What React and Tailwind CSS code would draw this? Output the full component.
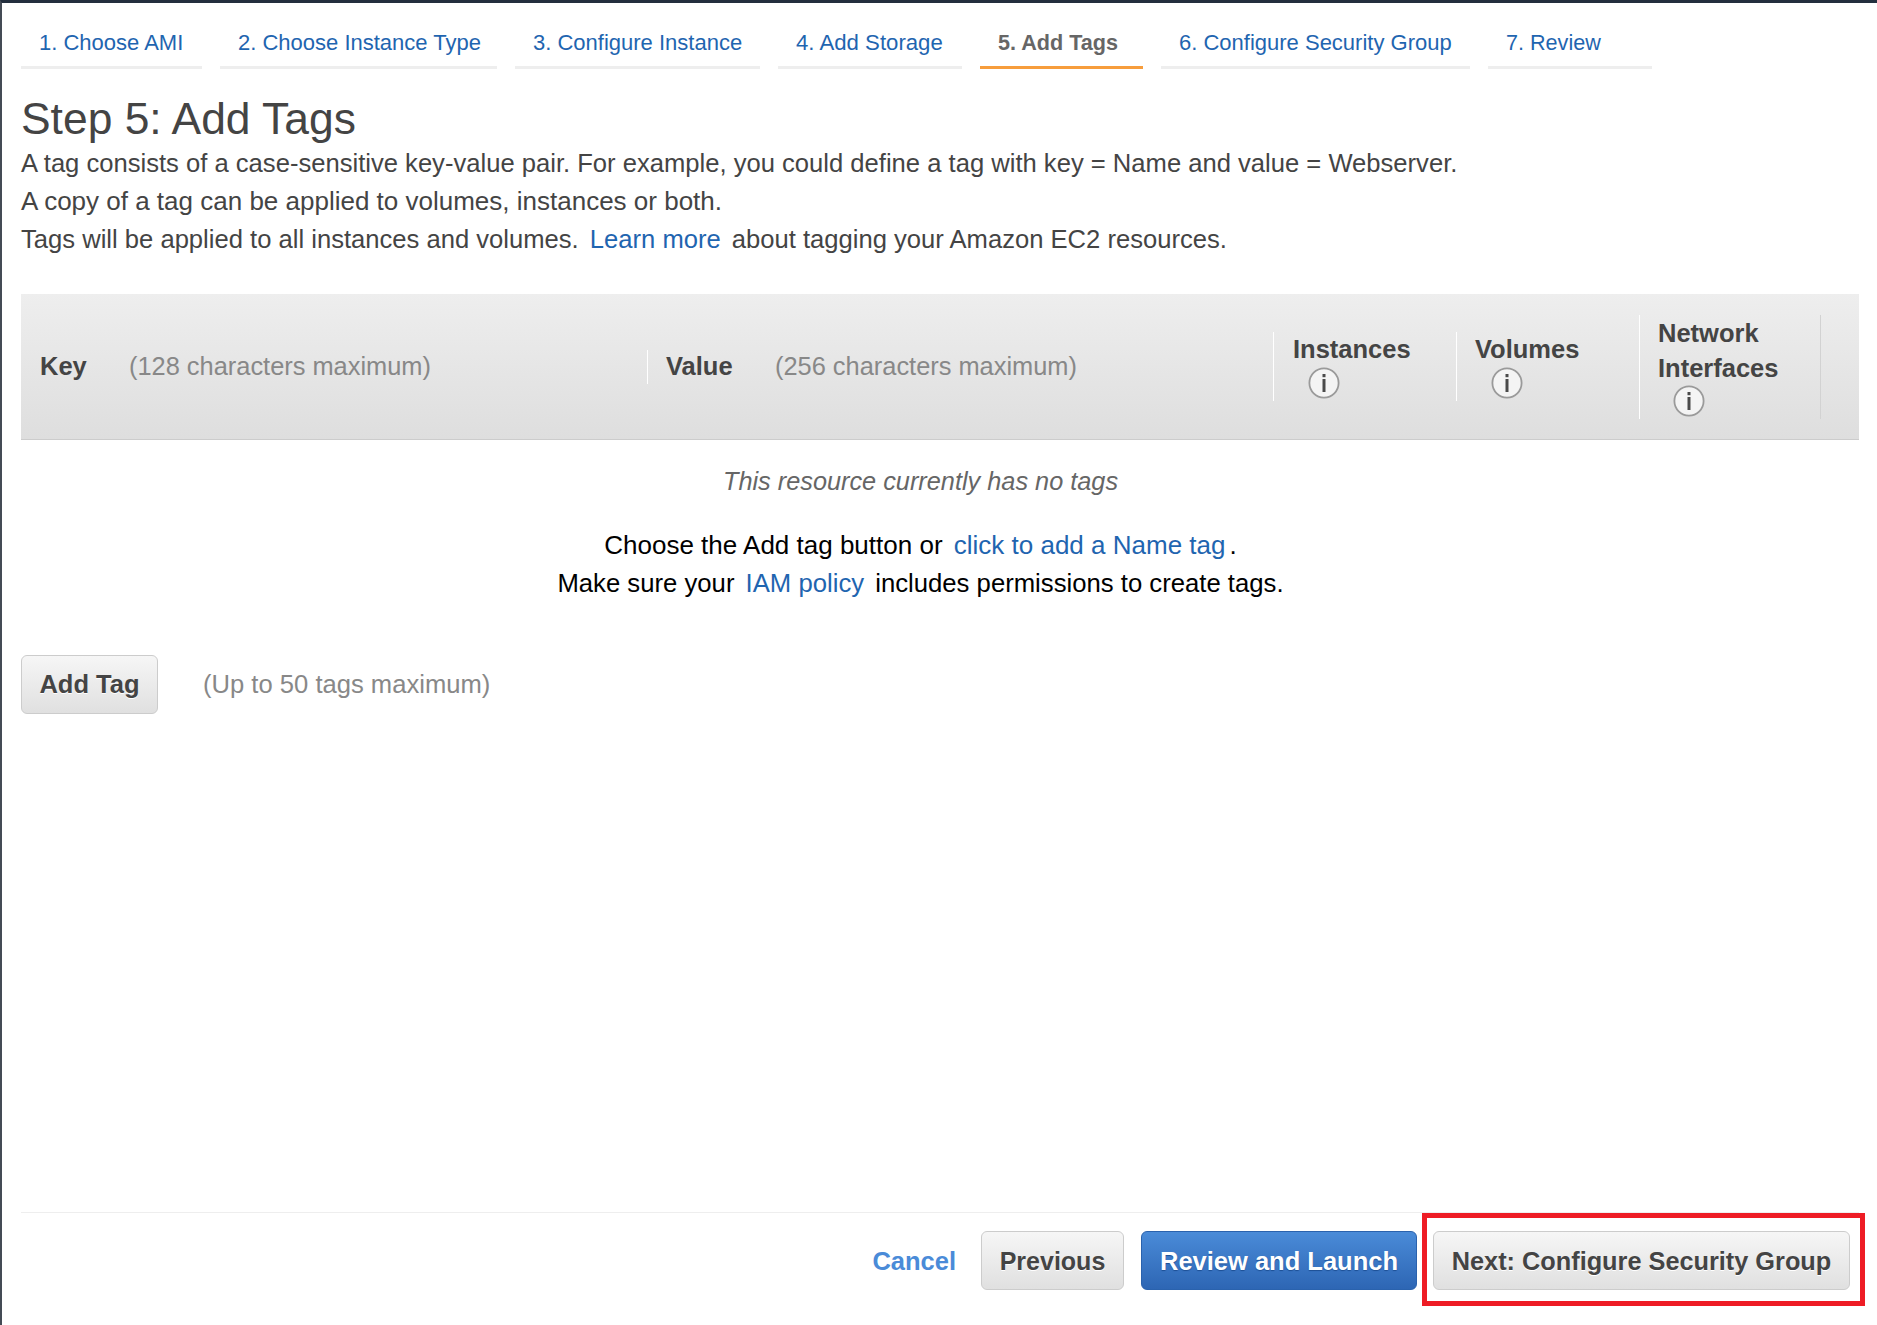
const tabs = [
  { label: '1. Choose AMI', width: 'w-[181px]', size: 'pt-[15px] text-[22px]' },
  { label: '2. Choose Instance Type', width: 'w-[277px]', size: 'pt-[15px] text-[22px]' },
  { label: '3. Configure Instance', width: 'w-[245px]', size: 'pt-[15px] text-[22px]' },
  { label: '4. Add Storage', width: 'w-[184px]', size: 'pt-[17px] text-[22.2px]' },
  { label: '5. Add Tags', width: 'w-[163px]', active: true, size: 'pt-[17px] text-[21.6px]' },
  { label: '6. Configure Security Group', width: 'w-[309px]', size: 'pt-[15px] text-[22px]' },
  { label: '7. Review', width: 'w-[164px]', size: 'pt-[17px] text-[21.6px]' },
]

const LINK = 'text-[#1f65b0]'
const GREY_BTN =
  'h-[59px] rounded-[6px] border border-[#cccccc] bg-gradient-to-b from-[#f6f6f6] to-[#e0e0e0] font-bold text-[#444444] [text-shadow:0_1px_0_#ffffff]'

function InfoIcon() {
  return (
    <svg width="32" height="32" viewBox="0 0 32 32" className="block">
      <circle cx="16" cy="16" r="14.6" fill="#f4f4f4" stroke="#9a9a9a" strokeWidth="1.8" />
      <rect x="14.5" y="7" width="3" height="3.2" fill="#4a4a4a" />
      <rect x="14.5" y="12" width="3" height="13" fill="#4a4a4a" />
    </svg>
  )
}

function HeaderCell({ className, children, last }) {
  return (
    <div className={`flex shrink-0 items-center ${className}`}>
      <div
        className={`border-l border-l-white pl-[18px] ${last ? 'border-r border-r-[#d2d2d2]' : ''}`}
      >
        {children}
      </div>
    </div>
  )
}

export default function App() {
  return (
    <div
      className="flex h-[1325px] flex-col border-t-[3px] border-l-2 border-t-[#232f3e] border-l-[#444b55] bg-white pr-[18px] pl-[19px] text-[#444444]"
      style={{ fontFamily: '"Liberation Sans", Arial, sans-serif' }}
    >
      {/* Wizard steps */}
      <nav className="flex h-[66px] gap-[18px]">
        {tabs.map((tab) => (
          <div
            key={tab.label}
            className={`${tab.width} ${tab.size} flex h-full items-center border-b-[3px] pl-[18px] whitespace-nowrap ${
              tab.active
                ? 'border-b-[#f79d3c] font-bold text-[#666666]'
                : 'border-b-[#eeeeee] text-[#1f65b0]'
            }`}
          >
            {tab.label}
          </div>
        ))}
      </nav>

      <h1 className="mt-[25px] text-[44.4px] leading-[50px] font-normal">Step 5: Add Tags</h1>
      <div className="text-[25.6px] leading-[38px]">
        <p>A tag consists of a case-sensitive key-value pair. For example, you could define a tag with key = Name and value = Webserver.</p>
        <p className="text-[26px]">A copy of a tag can be applied to volumes, instances or both.</p>
        <p>
          Tags will be applied to all instances and volumes. <a className={`${LINK} mx-[4px]`}>Learn more</a> about tagging your Amazon EC2 resources.
        </p>
      </div>

      {/* Tag table */}
      <div className="mt-[36px] flex h-[146px] border-b border-b-[#cccccc] bg-gradient-to-b from-[#eeeeee] to-[#dedede] text-[25.5px] leading-[35px]">
        <div className="flex w-[626px] shrink-0 items-center pl-[19px]">
          <span className="w-[89px] font-bold">Key</span>
          <span className="text-[25.4px] text-[#888888]">(128 characters maximum)</span>
        </div>
        <HeaderCell className="w-[626px]">
          <div className="flex h-[34px] items-center">
            <span className="w-[109px] font-bold">Value</span>
            <span className="text-[25.4px] text-[#888888]">(256 characters maximum)</span>
          </div>
        </HeaderCell>
        <HeaderCell className="w-[183px]">
          <div className="h-[69px] w-[164px] pl-[1px] font-bold">
            Instances
            <div className="pl-[15px]"><InfoIcon /></div>
          </div>
        </HeaderCell>
        <HeaderCell className="w-[183px]">
          <div className="h-[69px] w-[164px] font-bold">
            Volumes
            <div className="pl-[16px]"><InfoIcon /></div>
          </div>
        </HeaderCell>
        <HeaderCell className="w-[182px]" last>
          <div className="h-[104px] w-[162px] pt-[1px] font-bold">
            Network
            <br />
            Interfaces
            <div className="mt-[-1px] pl-[15px]"><InfoIcon /></div>
          </div>
        </HeaderCell>
      </div>

      {/* Empty state */}
      <div className="w-[1799px] text-center leading-[38px]">
        <p className="mt-[22px] text-[25.3px] text-[#666666] italic">This resource currently has no tags</p>
        <p className="mt-[26px] text-[26px] text-black">
          Choose the Add tag button or <a className={`${LINK} mx-[4px]`}>click to add a Name tag</a>.
        </p>
        <p className="text-[25.7px] text-black">
          Make sure your <a className={`${LINK} mx-[4px]`}>IAM policy</a> includes permissions to create tags.
        </p>
      </div>

      <div className="mt-[53px] flex items-center">
        <button className={`${GREY_BTN} w-[137px] text-[25.5px]`}>Add Tag</button>
        <span className="ml-[45px] text-[25.6px] text-[#888888]">(Up to 50 tags maximum)</span>
      </div>

      {/* Footer actions */}
      <div className="mt-auto mb-[35px] border-t border-t-[#eeeeee] pt-[18px]">
        <div className="flex items-center justify-end pr-[9px]">
          <a className="mr-[25px] pt-[2px] text-[25.5px] font-bold text-[#4a8bd8]">Cancel</a>
          <button className={`${GREY_BTN} mr-[17px] w-[143px] pt-[2px] text-[25px]`}>Previous</button>
          <button className="mr-[16px] h-[59px] w-[276px] rounded-[6px] border border-[#2a62ad] bg-gradient-to-b from-[#4a8bd8] to-[#2d66b4] pt-[2px] text-[25.5px] font-bold text-white [text-shadow:0_1px_1px_#1d4f94]">
            Review and Launch
          </button>
          <div className="relative">
            <button className={`${GREY_BTN} block w-[417px] pt-[2px] text-[25.3px]`}>Next: Configure Security Group</button>
            <div className="absolute -top-[18px] -right-[15px] -bottom-[16px] -left-[11px] border-[5px] border-[#ee1c25]" />
          </div>
        </div>
      </div>
    </div>
  )
}
